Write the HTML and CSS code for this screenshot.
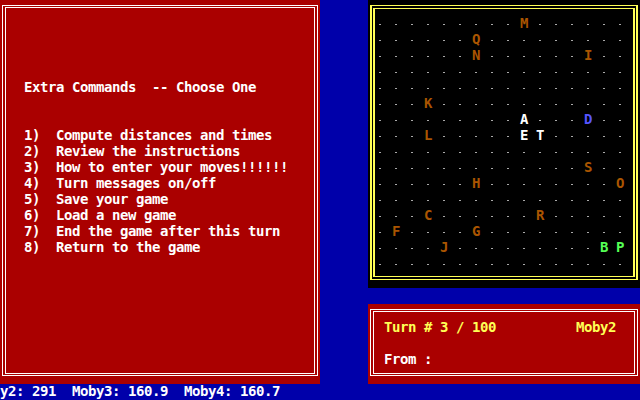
FILE: index.html
```html
<!DOCTYPE html>
<html>
<head>
<meta charset="utf-8">
<link rel="stylesheet" href="styles.css">
</head>
<body>
<div class="screen">
  <section class="menu">
    <div class="frame white">
      <div class="menu-title">Extra Commands  -- Choose One</div>
      <ol class="menu-list">
        <li>1)  Compute distances and times</li>
        <li>2)  Review the instructions</li>
        <li>3)  How to enter your moves!!!!!!</li>
        <li>4)  Turn messages on/off</li>
        <li>5)  Save your game</li>
        <li>6)  Load a new game</li>
        <li>7)  End the game after this turn</li>
        <li>8)  Return to the game</li>
      </ol>
    </div>
  </section>

  <section class="map">
    <div class="frame yellow">
      <div class="grid">
        <i></i><i></i><i></i><i></i><i></i><i></i><i></i><i></i><i></i><b class="o">M</b><i></i><i></i><i></i><i></i><i></i><i></i>
        <i></i><i></i><i></i><i></i><i></i><i></i><b class="o">Q</b><i></i><i></i><i></i><i></i><i></i><i></i><i></i><i></i><i></i>
        <i></i><i></i><i></i><i></i><i></i><i></i><b class="o">N</b><i></i><i></i><i></i><i></i><i></i><i></i><b class="o">I</b><i></i><i></i>
        <i></i><i></i><i></i><i></i><i></i><i></i><i></i><i></i><i></i><i></i><i></i><i></i><i></i><i></i><i></i><i></i>
        <i></i><i></i><i></i><i></i><i></i><i></i><i></i><i></i><i></i><i></i><i></i><i></i><i></i><i></i><i></i><i></i>
        <i></i><i></i><i></i><b class="o">K</b><i></i><i></i><i></i><i></i><i></i><i></i><i></i><i></i><i></i><i></i><i></i><i></i>
        <i></i><i></i><i></i><i></i><i></i><i></i><i></i><i></i><i></i><b class="w">A</b><i></i><i></i><i></i><b class="b">D</b><i></i><i></i>
        <i></i><i></i><i></i><b class="o">L</b><i></i><i></i><i></i><i></i><i></i><b class="w">E</b><b class="w">T</b><i></i><i></i><i></i><i></i><i></i>
        <i></i><i></i><i></i><i></i><i></i><i></i><i></i><i></i><i></i><i></i><i></i><i></i><i></i><i></i><i></i><i></i>
        <i></i><i></i><i></i><i></i><i></i><i></i><i></i><i></i><i></i><i></i><i></i><i></i><i></i><b class="o">S</b><i></i><i></i>
        <i></i><i></i><i></i><i></i><i></i><i></i><b class="o">H</b><i></i><i></i><i></i><i></i><i></i><i></i><i></i><i></i><b class="o">O</b>
        <i></i><i></i><i></i><i></i><i></i><i></i><i></i><i></i><i></i><i></i><i></i><i></i><i></i><i></i><i></i><i></i>
        <i></i><i></i><i></i><b class="o">C</b><i></i><i></i><i></i><i></i><i></i><i></i><b class="o">R</b><i></i><i></i><i></i><i></i><i></i>
        <i></i><b class="o">F</b><i></i><i></i><i></i><i></i><b class="o">G</b><i></i><i></i><i></i><i></i><i></i><i></i><i></i><i></i><i></i>
        <i></i><i></i><i></i><i></i><b class="o">J</b><i></i><i></i><i></i><i></i><i></i><i></i><i></i><i></i><i></i><b class="g">B</b><b class="g">P</b>
        <i></i><i></i><i></i><i></i><i></i><i></i><i></i><i></i><i></i><i></i><i></i><i></i><i></i><i></i><i></i><i></i>
      </div>
    </div>
  </section>

  <section class="turn">
    <div class="frame white">
      <div class="turn-line">Turn # 3 / 100          Moby2</div>
      <div class="from-line">From :</div>
    </div>
  </section>

  <div class="status">y2: 291  Moby3: 160.9  Moby4: 160.7</div>
</div>
</body>
</html>
```

FILE: styles.css
```css
html, body {
  margin: 0;
  padding: 0;
  background: #0000aa;
}

.screen {
  width: 640px;
  height: 400px;
  overflow: hidden;
  display: grid;
  grid-template-columns: 320px 48px 272px;
  grid-template-rows: 288px 16px 80px 16px;
  background: #0000aa;
  font-family: "DejaVu Sans Mono", "Liberation Mono", monospace;
  font-weight: bold;
  font-size: 14px;
  line-height: 16px;
  letter-spacing: -0.43px;
  color: #ffffff;
}

.menu-title,
.menu-list li,
.turn-line,
.from-line,
.status {
  white-space: pre;
  height: 16px;
}

.menu {
  grid-column: 1;
  grid-row: 1 / 4;
  background: #aa0000;
  padding: 5px 2px 8px 2px;
}

.map {
  grid-column: 3;
  grid-row: 1;
  background: #000000;
  padding: 5px 2px 8px 2px;
}

.turn {
  grid-column: 3;
  grid-row: 3;
  background: #aa0000;
  padding: 5px 2px 8px 2px;
}

.frame {
  box-sizing: border-box;
  height: 100%;
  border-style: double;
  border-width: 3px 4px;
}

.frame.white { border-color: #ffffff; }
.frame.yellow {
  border-color: #ffff55;
  border-width: 4px 5px;
}

.menu .frame {
  padding: 71px 0 0 18px;
}

.menu-list {
  list-style: none;
  margin: 32px 0 0 0;
  padding: 0;
}

.map .frame {
  padding: 7px 0 0 1px;
}

.grid {
  display: grid;
  grid-template-columns: repeat(16, 16px);
  grid-auto-rows: 16px;
}

.grid i::before {
  content: "";
  display: block;
  width: 2px;
  height: 1px;
  margin: 8px 0 0 3px;
  background: #aaaaaa;
}

.grid b {
  font-weight: bold;
  line-height: 16px;
  margin-top: -1px;
}
.grid .o { color: #aa5500; }
.grid .w { color: #ffffff; }
.grid .b { color: #5555ff; }
.grid .g { color: #55ff55; }

.turn .frame {
  padding: 7px 0 0 10px;
}

.turn-line {
  color: #ffff55;
}

.from-line {
  margin-top: 16px;
  color: #ffffff;
}

.status {
  grid-column: 1 / 4;
  grid-row: 4;
  color: #ffffff;
  margin-top: -1px;
}
```
